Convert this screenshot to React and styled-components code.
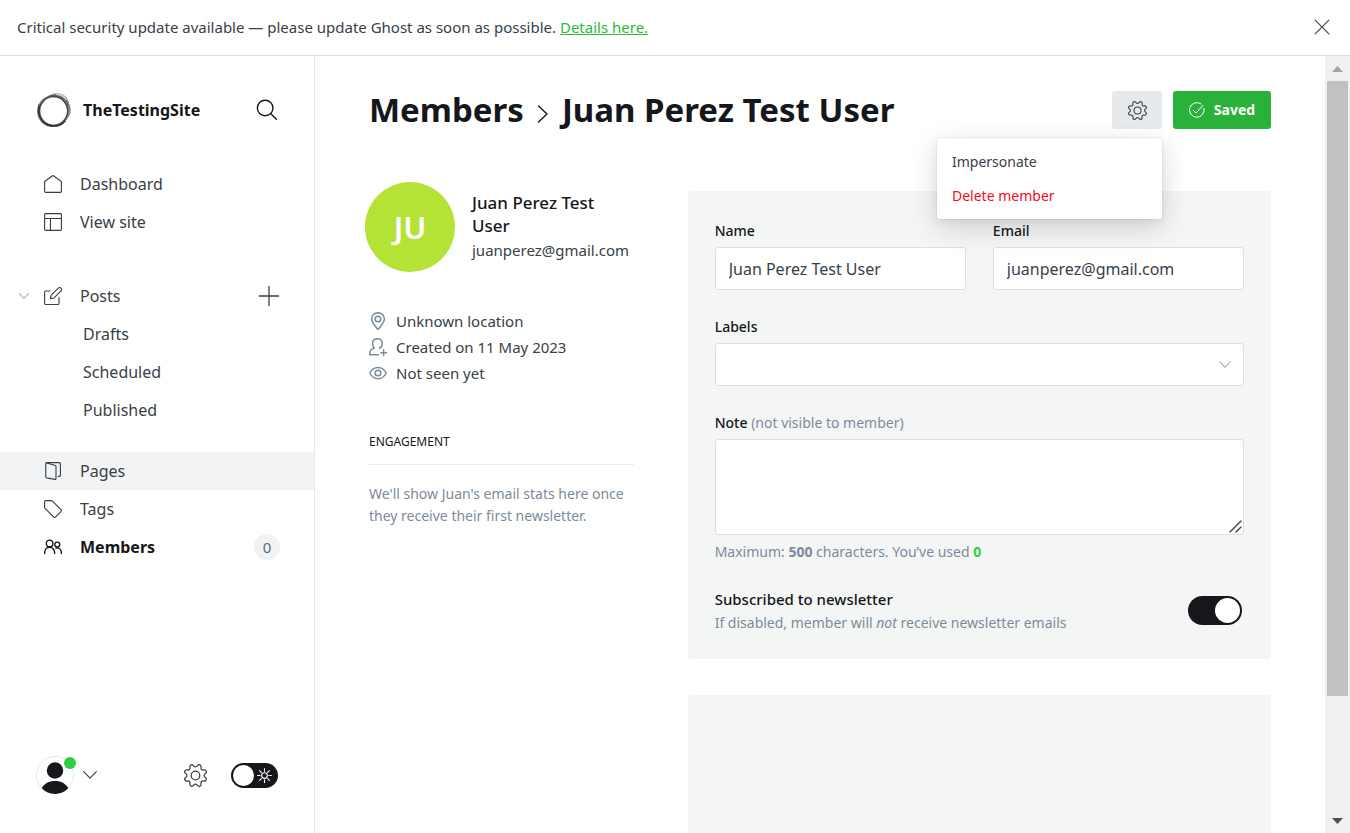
import React from 'react';
import styled, { createGlobalStyle, css } from 'styled-components';

const c = {
  black: '#15171a',
  dark: '#394047',
  mid: '#7c8b9a',
  line: '#dddfe0',
  hair: '#e6e9eb',
  green: '#30cf43',
  panel: '#f4f6f6',
};

const GlobalStyle = createGlobalStyle`
  *, *::before, *::after { box-sizing: border-box; }
  body {
    margin: 0;
    background: #fff;
    color: ${c.dark};
    font: 400 15px/22px "Noto Sans", "Open Sans", sans-serif;
  }
  a { color: inherit; text-decoration: none; }
  h1, h2, h3, p, ul { margin: 0; padding: 0; }
  ul { list-style: none; }
  button, input, select, textarea { font: inherit; color: inherit; margin: 0; }
  svg { display: block; flex: none; }
`;

const Svg = styled.svg`
  width: ${p => p.$size || 18}px;
  height: ${p => p.$h || p.$size || 18}px;
  fill: none;
  stroke: currentColor;
  stroke-width: ${p => p.$stroke || 1.5};
  stroke-linecap: round;
  stroke-linejoin: round;
`;

const Icon = ({ size, h, stroke, box = '0 0 24 24', children }) => (
  <Svg viewBox={box} $size={size} $h={h} $stroke={stroke} aria-hidden="true">{children}</Svg>
);

const Cog = props => (
  <Icon {...props}>
    <path d="M10.546,2.438a1.957,1.957,0,0,0,2.908,0L14.4,1.4a1.959,1.959,0,0,1,3.41,1.413l-.071,1.4A1.958,1.958,0,0,0,19.79,6.265l1.4-.071A1.959,1.959,0,0,1,22.6,9.6l-1.04.942a1.959,1.959,0,0,0,0,2.909l1.04.942a1.959,1.959,0,0,1-1.413,3.41l-1.4-.071a1.958,1.958,0,0,0-2.056,2.056l.071,1.4A1.959,1.959,0,0,1,14.4,22.6l-.942-1.04a1.959,1.959,0,0,0-2.908,0L9.6,22.6a1.959,1.959,0,0,1-3.41-1.413l.071-1.4a1.958,1.958,0,0,0-2.056-2.056l-1.4.071A1.959,1.959,0,0,1,1.4,14.4l1.04-.942a1.959,1.959,0,0,0,0-2.909L1.4,9.6A1.959,1.959,0,0,1,2.813,6.194l1.4.071A1.958,1.958,0,0,0,6.265,4.209l-.071-1.4A1.959,1.959,0,0,1,9.6,1.4Z" />
    <circle cx="12" cy="12" r="4.5" />
  </Icon>
);
const Chevron = props => <Icon box="0 0 14 8" {...props}><path d="M.7.7 7 7.2 13.3.7" /></Icon>;
const House = () => <Icon><path d="M.8 8.6v13.1a1.4 1.4 0 0 0 1.4 1.4h19.6a1.4 1.4 0 0 0 1.4-1.4V8.6L12.6 1a1 1 0 0 0-1.2 0z" /></Icon>;
const Layout = () => <Icon><rect x=".8" y=".8" width="22.4" height="22.4" rx="1.2" /><path d="M.8 7.3h22.4M8.6 7.3v15.9" /></Icon>;
const Compose = () => (
  <Icon>
    <path d="M8 5.3H2.3A1.5 1.5 0 0 0 .8 6.8v15a1.5 1.5 0 0 0 1.5 1.5h16.2a1.5 1.5 0 0 0 1.5-1.5V14" />
    <path d="m13.300 14.600-4.600.9.900-4.600 9.400-9.400a2.400 2.400 0 0 1 3.500 0l.3.3a2.400 2.400 0 0 1 0 3.400z" />
  </Icon>
);
const PagesIcon = () => (
  <Icon>
    <path d="M2.300 2.300v17.500a1.400 1.400 0 0 0 1 1.300l11.500 2.100a1 1 0 0 0 1.200-1V6a1.400 1.400 0 0 0-1-1.300L3.700 1.200a1.100 1.100 0 0 0-1.400 1.100z" />
    <path d="M3.300.8h17.200a1.400 1.400 0 0 1 1.400 1.400v15.600a1.400 1.400 0 0 1-1.400 1.400H19" />
  </Icon>
);
const TagIcon = () => <Icon><path d="M2.200.8h7.600a2 2 0 0 1 1.400.6l11.300 11.300a2 2 0 0 1 0 2.900l-6.900 6.900a2 2 0 0 1-2.900 0L1.400 11.300a2 2 0 0 1-.6-1.400V2.200A1.400 1.400 0 0 1 2.200.8z" /></Icon>;
const People = () => (
  <Icon stroke={1.8}>
    <circle cx="7.500" cy="7.200" r="4.400" />
    <path d="M.8 20.800c0-5 2.700-8.200 6.700-8.200s6.700 3.200 6.700 8.200" />
    <circle cx="17.700" cy="8.700" r="3.300" />
    <path d="M15.900 13.400c4.300-1.200 7.300 1.700 7.300 7.400" />
  </Icon>
);
const Pin = () => <Icon stroke={2}><path d="M12 .9c4.800 0 8.500 3.700 8.500 8.400 0 5-4.500 8.700-7.300 13a1.400 1.400 0 0 1-2.400 0C8 18 3.500 14.300 3.500 9.300 3.500 4.600 7.200.9 12 .9z" /><circle cx="12" cy="9.300" r="3.700" /></Icon>;
const UserAdd = () => (
  <Icon stroke={2}>
    <path d="M12.500 22.200H1v-1.700c0-3.500 2-6 6.200-7C5.600 12 4.800 9.900 4.800 7.600c0-4 2.600-6.600 6.400-6.600s6.400 2.600 6.400 6.600c0 2.800-1.300 5-3.600 6" />
    <path d="M19.500 15.800v7.400M15.800 19.500h7.400" />
  </Icon>
);
const Eye = () => <Icon stroke={2}><path d="M1 12C3.500 7.300 7.200 4.500 12 4.500S20.500 7.300 23 12C20.500 16.700 16.800 19.500 12 19.500S3.500 16.700 1 12z" /><circle cx="12" cy="12" r="3.800" /></Icon>;

const Page = styled.div`display: flex; flex-direction: column; height: 100vh;`;

const Banner = styled.aside`
  display: flex;
  align-items: center;
  justify-content: space-between;
  height: 56px;
  flex: none;
  padding: 0 17px 2px;
  border-bottom: 1px solid ${c.line};
`;
const BannerLink = styled.a`color: #2bba3c; text-decoration: underline;`;

const BareButton = styled.button`
  display: flex;
  padding: 0;
  border: 0;
  background: none;
  color: ${p => p.$color || c.dark};
  cursor: pointer;
`;

const Body = styled.div`display: flex; flex: 1; min-height: 0;`;

const Sidebar = styled.nav`
  display: flex;
  flex-direction: column;
  flex: none;
  width: 315px;
  border-right: 1px solid ${c.hair};
`;
const SiteBar = styled.div`
  display: flex;
  align-items: center;
  height: 38px;
  margin: 35px 36px 36px;
`;
const SiteName = styled.strong`flex: 1; margin-left: 11px; font-size: 16px; color: ${c.black};`;

const NavList = styled.ul`margin-bottom: ${p => p.$gap || 0}px;`;
const NavRow = styled.li`
  display: flex;
  align-items: center;
  height: 38px;
  padding-right: 34px;
  background: ${p => (p.$hover ? '#f1f3f5' : 'none')};
`;
const Expander = styled.span`
  display: flex;
  width: 44px;
  padding-left: 19px;
  color: #a5b0ba;
`;
const NavLink = styled.a`
  display: flex;
  align-items: center;
  gap: 18px;
  flex: 1;
  font-size: 16px;
  ${p => p.$active && css`color: ${c.black}; font-weight: 700;`}
`;
const SubLink = styled.a`padding-left: 83px; font-size: 16px;`;
const Count = styled.span`
  width: 26px;
  border-radius: 13px;
  background: #f0f2f4;
  color: #5c6b7a;
  text-align: center;
  line-height: 26px;
`;

const UserBar = styled.div`
  display: flex;
  align-items: center;
  margin-top: auto;
  padding: 0 36px 39px;
`;
const Avatar = styled.span`
  position: relative;
  width: 38px;
  height: 38px;
  margin-right: 9px;
`;
const OnlineDot = styled.i`
  position: absolute;
  top: 1px;
  right: -2px;
  width: 12px;
  height: 12px;
  border-radius: 50%;
  background: ${c.green};
`;
const CogLink = styled.a`margin: 0 24px 0 auto;`;

const Switch = styled.input`
  appearance: none;
  flex: none;
  display: flex;
  align-items: center;
  justify-content: ${p => (p.$right ? 'flex-end' : 'flex-start')};
  width: ${p => p.$w}px;
  height: ${p => p.$h}px;
  padding: 0 2px;
  border-radius: 15px;
  background: ${c.black};
  &::before {
    content: '';
    width: ${p => p.$h - 4}px;
    height: ${p => p.$h - 4}px;
    border-radius: 50%;
    background: #fff;
  }
`;
const NightLabel = styled.label`position: relative; display: flex;`;
const SunSpot = styled.span`
  position: absolute;
  top: 5px;
  right: 6px;
  color: #fff;
`;

const Main = styled.main`
  flex: 1;
  min-width: 0;
  overflow: hidden;
  padding: 35px 54px 0;
`;
const Header = styled.header`
  display: flex;
  align-items: center;
  justify-content: space-between;
  height: 38px;
  margin-bottom: 62px;
`;
const Title = styled.h1`
  display: flex;
  align-items: center;
  gap: 13px;
  font-size: 33px;
  line-height: 38px;
  color: ${c.black};
  white-space: nowrap;
`;
const Crumb = styled.span`display: flex; padding-top: 8px;`;
const Actions = styled.div`position: relative; display: flex; gap: 11px;`;
const ActionButton = styled.button`
  display: flex;
  align-items: center;
  justify-content: center;
  gap: 9px;
  width: ${p => p.$w}px;
  height: 38px;
  padding: 0;
  border: 0;
  border-radius: 3px;
  background: ${p => (p.$primary ? '#2ab13a' : '#e6eaed')};
  color: ${p => (p.$primary ? '#fff' : c.dark)};
  font-size: 14px;
  font-weight: 700;
`;
const Menu = styled.ul`
  position: absolute;
  top: 47px;
  right: 109px;
  width: 225px;
  padding: 7px 0 6px;
  border-radius: 3px;
  background: #fff;
  box-shadow: 0 0 0 1px rgba(0, 0, 0, .04), 0 8px 28px rgba(0, 0, 0, .16), 0 3px 9px rgba(0, 0, 0, .05);
`;
const MenuButton = styled.button`
  display: block;
  width: 100%;
  height: 34px;
  padding: 0 15px;
  border: 0;
  background: none;
  color: ${p => (p.$danger ? '#f50b23' : c.dark)};
  font-size: 14px;
  text-align: left;
`;

const Columns = styled.div`
  display: grid;
  grid-template-columns: repeat(3, minmax(0, 1fr));
  column-gap: 54px;
`;
const Profile = styled.section`min-width: 0;`;
const Identity = styled.div`
  display: flex;
  align-items: center;
  gap: 17px;
  margin: -9px 0 36px -4px;
`;
const Initials = styled.div`
  flex: none;
  width: 90px;
  border-radius: 50%;
  background: #b5e335;
  color: #fff;
  font-size: 31px;
  font-weight: 600;
  line-height: 90px;
  text-align: center;
`;
const Name = styled.h3`
  color: ${c.black};
  font-size: 17px;
  font-weight: 500;
  line-height: 23px;
`;
const Email = styled.p`line-height: 27px;`;
const Facts = styled.ul`margin-bottom: 45px;`;
const Fact = styled.li`
  display: flex;
  align-items: center;
  gap: 9px;
  height: 26px;
  svg { color: ${c.mid}; }
`;
const SectionTitle = styled.h4`
  margin: 0 0 18px;
  padding-bottom: 11px;
  border-bottom: 1px solid #e8ecee;
  color: ${c.black};
  font-size: 12px;
  font-weight: 400;
`;
const Muted = styled.p`color: ${c.mid}; font-size: 14px; line-height: 22px;`;

const Panels = styled.div`grid-column: span 2; display: grid; gap: 36px;`;
const Panel = styled.section`
  display: grid;
  gap: 24px 27px;
  grid-template-columns: 1fr 1fr;
  align-content: start;
  min-height: ${p => p.$min || 0}px;
  padding: 27px 27px 25px;
  border-radius: 3px;
  background: ${c.panel};
`;
const Field = styled.div`
  display: flex;
  flex-direction: column;
  grid-column: span ${p => p.$span || 1};
  min-width: 0;
`;
const Label = styled.label`
  margin-bottom: 4px;
  color: ${c.black};
  font-size: 14px;
  font-weight: 500;
  line-height: 25px;
  small { color: ${c.mid}; font-size: 14px; font-weight: 400; }
`;
const box = css`
  display: block;
  width: 100%;
  border: 1px solid ${c.line};
  border-radius: 3px;
  background: #fff;
  outline: 0;
  font-size: 16px;
`;
const TextBox = styled.input`${box} height: 43px; padding: 0 13px;`;
const Select = styled.select`${box} appearance: none; height: 43px; padding: 0 13px;`;
const Area = styled.textarea`${box} height: 96px; padding: 9px 13px; resize: none;`;
const Wrap = styled.div`position: relative;`;
const Corner = styled.span`
  position: absolute;
  right: ${p => p.$right}px;
  bottom: ${p => p.$bottom}px;
  color: ${p => p.$color};
  pointer-events: none;
`;
const Hint = styled.p`
  margin-top: 6px;
  color: ${c.mid};
  font-size: 14px;
  line-height: 22px;
  b { font-weight: 700; }
`;
const Used = styled.b`color: ${c.green};`;
const Subscribe = styled.div`
  grid-column: span 2;
  display: flex;
  align-items: center;
  justify-content: space-between;
  padding-right: 2px;
`;
const SubscribeLabel = styled.label`
  display: block;
  color: ${c.black};
  font-size: 15px;
  font-weight: 500;
  line-height: 25px;
`;

const ScrollBar = styled.div`
  display: flex;
  flex-direction: column;
  flex: none;
  width: 25px;
  background: #f0f0f0;
`;
const ScrollEnd = styled.span`
  display: flex;
  align-items: center;
  justify-content: center;
  height: 25px;
  color: ${p => p.$color};
`;
const Thumb = styled.span`flex: 11; margin: 0 2px; background: #c1c1c1;`;
const Track = styled.span`flex: 2;`;

const Item = ({ icon, label, hover, active, open, children }) => (
  <NavRow $hover={hover}>
    <Expander>{open && <Chevron size={10} h={6} />}</Expander>
    <NavLink href="#" $active={active}>{icon}{label}</NavLink>
    {children}
  </NavRow>
);

export default function App() {
  return (
    <Page>
      <GlobalStyle />
      <Banner>
        <p>Critical security update available — please update Ghost as soon as possible. <BannerLink href="#">Details here.</BannerLink></p>
        <BareButton aria-label="Close"><Icon size={22}><path d="m4.500 4.500 15 15M19.500 4.500l-15 15" strokeWidth="1.200" /></Icon></BareButton>
      </Banner>
      <Body>
        <Sidebar>
          <SiteBar>
            <Svg viewBox="0 0 36 36" $size={36}>
              <path fillRule="evenodd" fill="#8a8a8a" stroke="none" d="M14 3.500C18 .3 25 .5 29.500 4.500 32 7 32.500 9 33 11.500c2.500 5 2.500 10-1 14.500C29 31 24 34.500 18 35 9 35.500 2 29.500 1.200 21 .5 13 5 5.500 14 3.500zM17.500 5.500C10 5.500 4.500 11.500 4.500 19c0 7.500 5.500 13.500 13 13.500 7 0 12.500-5.500 13.500-12.500C31.500 11 25 5.500 17.500 5.500z" />
              <path d="M21 2.500c4 .3 7.500 2 9 5" stroke="#cfcfcf" strokeWidth="2" />
              <ellipse cx="17.500" cy="19" rx="14.200" ry="14.600" stroke="#444" strokeWidth="1.300" />
              <path d="M3 13C.5 22 5 32 15 34c6 .8 11-1 14-5" stroke="#333" strokeWidth="1.300" />
              <path d="M13 4c7-2 17 0 19.500 10" stroke="#555" strokeWidth="1" />
            </Svg>
            <SiteName>TheTestingSite</SiteName>
            <BareButton $color={c.black} aria-label="Search">
              <Icon size={22}><circle cx="10" cy="9.800" r="8.500" /><path d="m16.200 16 6 6" /></Icon>
            </BareButton>
          </SiteBar>
          <NavList $gap={36}>
            <Item icon={<House />} label="Dashboard" />
            <Item icon={<Layout />} label="View site" />
          </NavList>
          <NavList $gap={23}>
            <Item icon={<Compose />} label="Posts" open>
              <BareButton aria-label="New post"><Icon size={22}><path d="M12 1.500v21M1.500 12h21" strokeWidth="1.400" /></Icon></BareButton>
            </Item>
            <NavRow><SubLink href="#">Drafts</SubLink></NavRow>
            <NavRow><SubLink href="#">Scheduled</SubLink></NavRow>
            <NavRow><SubLink href="#">Published</SubLink></NavRow>
          </NavList>
          <NavList>
            <Item icon={<PagesIcon />} label="Pages" hover />
            <Item icon={<TagIcon />} label="Tags" />
            <Item icon={<People />} label="Members" active><Count>0</Count></Item>
          </NavList>
          <UserBar>
            <Avatar>
              <Svg viewBox="0 0 38 38" $size={38} $stroke="1">
                <circle cx="19" cy="19" r="18.500" stroke="#e6e9eb" />
                <g fill="#15171a" stroke="none">
                  <circle cx="19" cy="14.500" r="8.200" />
                  <path d="M5.800 32.300C8 27.500 13 25 19 25s11 2.500 13.200 7.300A18.500 18.500 0 0 1 19 38a18.500 18.500 0 0 1-13.200-5.700z" />
                </g>
              </Svg>
              <OnlineDot />
            </Avatar>
            <BareButton aria-label="Account menu"><Chevron size={14} h={8} stroke={1.2} /></BareButton>
            <CogLink href="#" aria-label="Settings"><Cog size={23} stroke={1.3} /></CogLink>
            <NightLabel>
              <Switch type="checkbox" aria-label="Night shift" $w={47} $h={25} />
              <SunSpot>
                <Icon size={15} stroke={1.8}>
                  <circle cx="12" cy="12" r="4.500" />
                  <path d="M12 1v4M12 19v4M1 12h4M19 12h4M4.200 4.200 7 7M17 17l2.800 2.800M19.800 4.200 17 7M7 17l-2.800 2.800" />
                </Icon>
              </SunSpot>
            </NightLabel>
          </UserBar>
        </Sidebar>
        <Main>
          <Header>
            <Title>
              <a href="#">Members</a>
              <Crumb><Icon size={12} h={18} box="0 0 12 18" stroke={1.4}><path d="m1.500 1 8.500 8-8.500 8" /></Icon></Crumb>
              Juan Perez Test User
            </Title>
            <Actions>
              <ActionButton $w={50} aria-label="Member actions"><Cog size={19} stroke={1.4} /></ActionButton>
              <ActionButton $w={98} $primary>
                <Icon size={16}><path d="M22.500 9.500A11 11 0 1 1 18 2.800" /><path d="m6.500 12.500 4 4L21 5" /></Icon>
                Saved
              </ActionButton>
              <Menu>
                <li><MenuButton>Impersonate</MenuButton></li>
                <li><MenuButton $danger>Delete member</MenuButton></li>
              </Menu>
            </Actions>
          </Header>
          <Columns>
            <Profile>
              <Identity>
                <Initials>JU</Initials>
                <div>
                  <Name>Juan Perez Test User</Name>
                  <Email>juanperez@gmail.com</Email>
                </div>
              </Identity>
              <Facts>
                <Fact><Pin />Unknown location</Fact>
                <Fact><UserAdd />Created on 11 May 2023</Fact>
                <Fact><Eye />Not seen yet</Fact>
              </Facts>
              <SectionTitle>ENGAGEMENT</SectionTitle>
              <Muted>We'll show Juan's email stats here once they receive their first newsletter.</Muted>
            </Profile>
            <Panels>
              <Panel>
                <Field>
                  <Label htmlFor="name">Name</Label>
                  <TextBox id="name" defaultValue="Juan Perez Test User" />
                </Field>
                <Field>
                  <Label htmlFor="email">Email</Label>
                  <TextBox id="email" defaultValue="juanperez@gmail.com" />
                </Field>
                <Field $span={2}>
                  <Label htmlFor="labels">Labels</Label>
                  <Wrap>
                    <Select id="labels"><option /></Select>
                    <Corner $right={13} $bottom={18} $color="#b3bcc4"><Chevron size={12} h={7} /></Corner>
                  </Wrap>
                </Field>
                <Field $span={2}>
                  <Label htmlFor="note">Note <small>(not visible to member)</small></Label>
                  <Wrap>
                    <Area id="note" />
                    <Corner $right={2} $bottom={2} $color="#4a4a4a">
                      <Icon size={13} box="0 0 13 13" stroke={1.5}><path d="M1 12 12 1M7 12l5-5" /></Icon>
                    </Corner>
                  </Wrap>
                  <Hint>Maximum: <b>500</b> characters. You’ve used <Used>0</Used></Hint>
                </Field>
                <Subscribe>
                  <div>
                    <SubscribeLabel htmlFor="subscribed">Subscribed to newsletter</SubscribeLabel>
                    <Muted>If disabled, member will <em>not</em> receive newsletter emails</Muted>
                  </div>
                  <Switch id="subscribed" type="checkbox" defaultChecked $right $w={54} $h={29} />
                </Subscribe>
              </Panel>
              <Panel $min={240} />
            </Panels>
          </Columns>
        </Main>
        <ScrollBar aria-hidden="true">
          <ScrollEnd $color="#a3a3a3"><Icon size={11} h={6} box="0 0 11 6"><path d="M0 6 5.500 0 11 6z" fill="currentColor" stroke="none" /></Icon></ScrollEnd>
          <Thumb />
          <Track />
          <ScrollEnd $color="#505050"><Icon size={11} h={6} box="0 0 11 6"><path d="M0 0h11L5.500 6z" fill="currentColor" stroke="none" /></Icon></ScrollEnd>
        </ScrollBar>
      </Body>
    </Page>
  );
}
